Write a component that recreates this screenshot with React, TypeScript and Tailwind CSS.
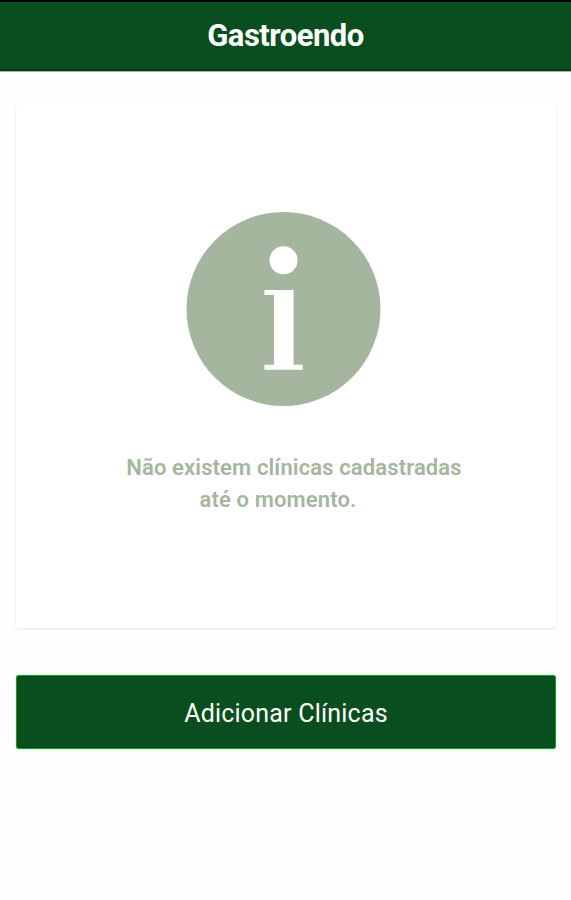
export default function App() {
  return (
    <div className="flex min-h-screen flex-col bg-[#fefefe] font-[Roboto,sans-serif]">
      <header className="flex h-[72px] items-center justify-center border-t-2 border-b border-t-black border-b-[#a3b5a0] bg-[#0a4d1e] shadow-[inset_0_-2px_0_#02400e]">
        <h1 className="text-[31px] font-bold tracking-[-0.5px] text-white">Gastroendo</h1>
      </header>

      <main className="flex flex-col pt-8 pr-[15px] pl-4">
        <section className="flex h-[524px] flex-col items-center rounded-sm bg-white pt-[107px] shadow-[0_1px_3px_rgba(0,0,0,0.1)]">
          <svg viewBox="0 0 194 194" className="mr-[5px] size-[195px]" aria-hidden="true">
            <circle cx="97" cy="97.5" r="96.5" fill="#a4b69e" />
            <circle cx="97" cy="49" r="14" fill="#fff" />
            <path d="M78 78.5h29v74.500h9v5H78v-5h9.500V83.500H78z" fill="#fff" />
          </svg>
          <p className="mt-[46px] text-center text-[22px] leading-8 font-semibold tracking-[0.13px] text-[#a4b69e]">
            <span className="block pl-4">Não existem clínicas cadastradas</span>
            <span className="block pr-4">até o momento.</span>
          </p>
        </section>

        <button
          type="button"
          className="mt-[47px] h-[74px] rounded-[3px] border border-[#0fa52b] bg-[#0a4d1e] pt-[3px] text-[25px] tracking-[0.2px] text-white shadow-[inset_0_0_0_1px_#05450f,0_0_1px_#12a52b]"
        >
          Adicionar Clínicas
        </button>
      </main>
    </div>
  )
}
